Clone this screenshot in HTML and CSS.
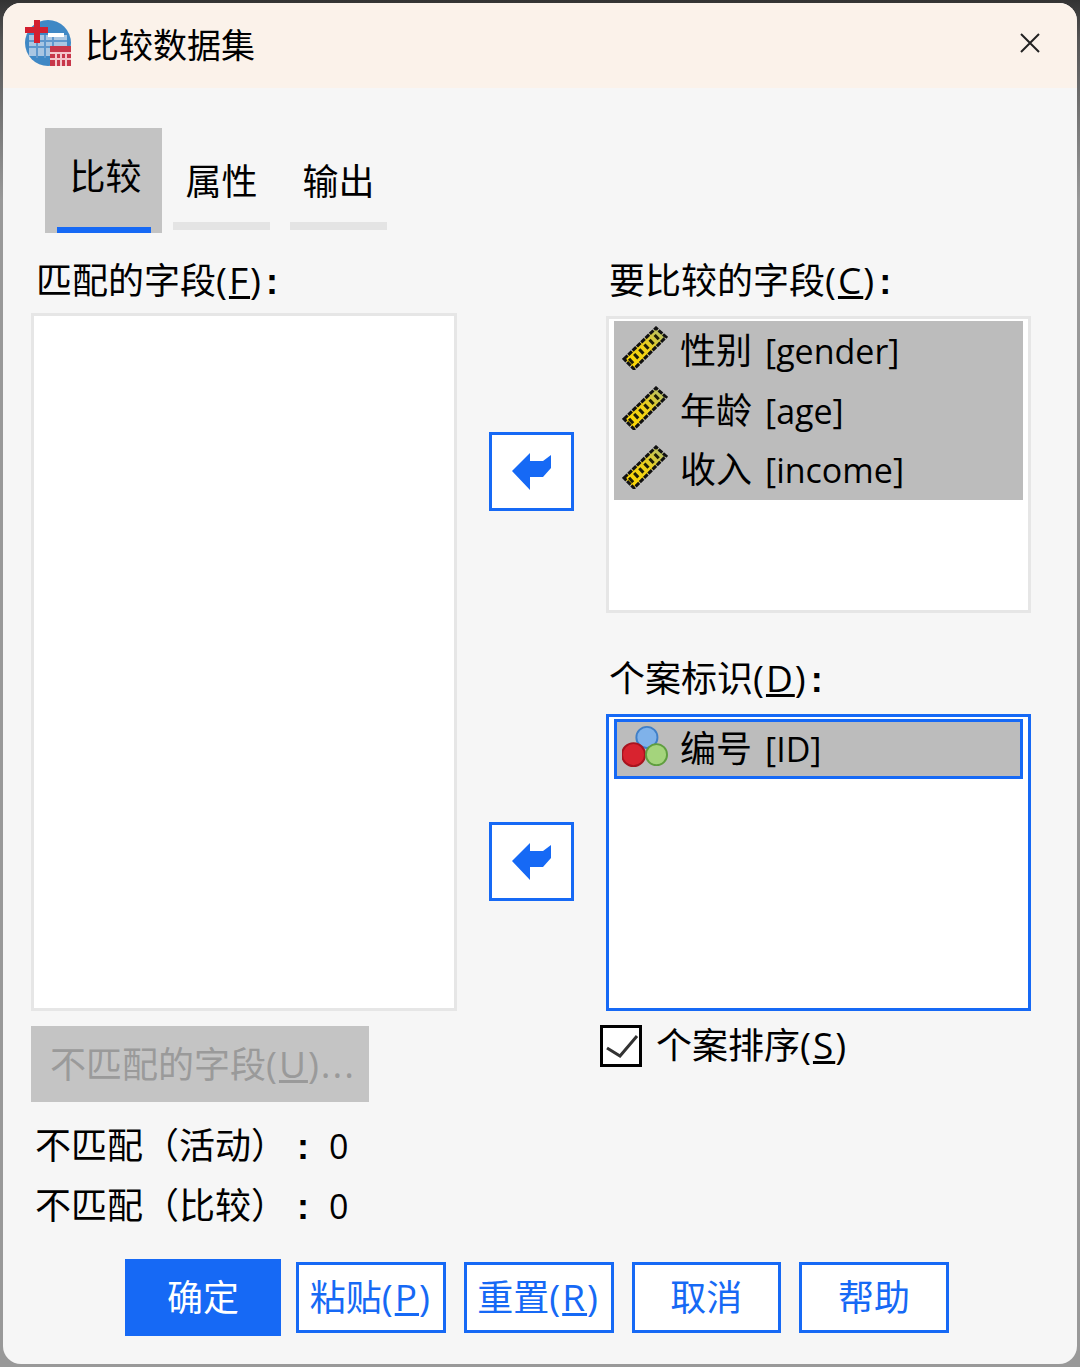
FILE: index.html
```html
<!DOCTYPE html>
<html lang="zh-CN">
<head>
  <meta charset="UTF-8" />
  <title>比较数据集</title>
  <link rel="stylesheet" href="styles.css">
</head>
<body>
  <svg class="defs" width="0" height="0">
    <defs>
      <linearGradient id="rulerFill" x1="0" y1="1" x2="1" y2="0">
        <stop offset="0" stop-color="#ffd800"/>
        <stop offset="0.55" stop-color="#eccf1c"/>
        <stop offset="1" stop-color="#a8bb78"/>
      </linearGradient>
      <symbol id="ruler" viewBox="0 0 44 44">
        <path d="M1 33 L33 2 L43 11 L11 43 Z" fill="url(#rulerFill)" stroke="#111" stroke-width="3" stroke-dasharray="5 1"/>
        <path d="M7 36 L37 8" stroke="#1c1c08" stroke-width="6" stroke-dasharray="3 4" fill="none"/>
      </symbol>
      <symbol id="arrow" viewBox="0 0 43 39">
        <path d="M2 19 L20 1 V9 H33 L41 3 V16 L33 25 H20 V38 Z" fill="#1669f5"/>
      </symbol>
    </defs>
  </svg>

  <div class="window">
    <div class="titlebar">
      <svg class="app-icon" width="46" height="46" viewBox="0 0 46 46">
        <circle cx="23" cy="23" r="23" fill="#3f88c5"/>
        <path d="M4 15 H42 V36 H4 Z" fill="#a9c6e2"/>
        <path d="M4 21 H42 M4 27 H42 M12 15 V38 M20 15 V38 M28 15 V38" stroke="#5f97cc" stroke-width="2"/>
        <rect x="23" y="13" width="16" height="4" fill="#ffffff"/>
        <path d="M0 7 H9 V0 H15 V7 H23 V13 H15 V23 H9 V13 H0 Z" fill="#d31f2f"/>
        <rect x="25" y="26" width="21" height="20" fill="#c8374a"/>
        <path d="M25 33 H46 M25 39 H46 M31 33 V46 M36 33 V46 M41 33 V46" stroke="#f3c7cc" stroke-width="2"/>
      </svg>
      <div class="title">比较数据集</div>
      <svg class="close" width="22" height="22" viewBox="0 0 22 22">
        <path d="M2 2 L20 20 M20 2 L2 20" stroke="#222" stroke-width="2" fill="none"/>
      </svg>
    </div>

    <div class="tabs">
      <div class="tab active"><div class="tab-label">比较</div><div class="tab-bar"></div></div>
      <div class="tab"><div class="tab-label">属性</div><div class="tab-bar"></div></div>
      <div class="tab"><div class="tab-label">输出</div><div class="tab-bar"></div></div>
    </div>

    <div class="main">
      <div class="col-left">
        <div class="label label-first left-label">匹配的字段<span class="mn">(<u>F</u>)</span><b class="colon">:</b></div>
        <div class="list list-tall"></div>
        <div class="btn-disabled">不匹配的字段<span class="mn">(<u>U</u>)...</span></div>
        <div class="status">不匹配（活动）<b class="colon-status">:</b><span class="num">0</span></div>
        <div class="status">不匹配（比较）<b class="colon-status">:</b><span class="num">0</span></div>
      </div>

      <div class="col-mid">
        <div class="move-btn"><svg width="43" height="39"><use href="#arrow"/></svg></div>
        <div class="move-btn"><svg width="43" height="39"><use href="#arrow"/></svg></div>
      </div>

      <div class="col-right">
        <div class="label label-first">要比较的字段<span class="mn">(<u>C</u>)</span><b class="colon">:</b></div>
        <div class="list list-short">
          <div class="row"><svg class="row-icon" width="46" height="44"><use href="#ruler"/></svg><span>性别 <span class="field">[gender]</span></span></div>
          <div class="row"><svg class="row-icon" width="46" height="44"><use href="#ruler"/></svg><span>年龄 <span class="field">[age]</span></span></div>
          <div class="row"><svg class="row-icon" width="46" height="44"><use href="#ruler"/></svg><span>收入 <span class="field">[income]</span></span></div>
        </div>
        <div class="label label-second">个案标识<span class="mn">(<u>D</u>)</span><b class="colon">:</b></div>
        <div class="list list-short focused">
          <div class="row current">
            <svg class="row-icon" width="46" height="46" viewBox="0 0 48 46">
              <circle cx="26" cy="14" r="11" fill="#7fb2ea" stroke="#3f7fc8" stroke-width="2"/>
              <circle cx="12" cy="32" r="12" fill="#d8232f" stroke="#a8141f" stroke-width="2"/>
              <circle cx="36" cy="32" r="11" fill="#a4d47c" stroke="#5f9e3f" stroke-width="2"/>
            </svg>
            <span>编号 <span class="field">[ID]</span></span>
          </div>
        </div>
        <label class="check">
          <span class="check-box">
            <svg width="36" height="36" viewBox="0 0 36 36"><path d="M4 20 L17 28 L34 8" stroke="#333" stroke-width="3" fill="none"/></svg>
          </span>
          <span>个案排序<span class="mn">(<u>S</u>)</span></span>
        </label>
      </div>
    </div>

    <div class="footer">
      <button class="btn primary">确定</button>
      <button class="btn">粘贴<span class="mn">(<u>P</u>)</span></button>
      <button class="btn">重置<span class="mn">(<u>R</u>)</span></button>
      <button class="btn">取消</button>
      <button class="btn">帮助</button>
    </div>
  </div>
</body>
</html>
```

FILE: styles.css
```css
* {
  box-sizing: border-box;
}

html, body {
  margin: 0;
  height: 1367px;
  overflow: hidden;
}

body {
  padding: 3px;
  background: linear-gradient(#333333 0, #555555 40px, #999999 200px);
  font-family: "Liberation Sans", "Noto Sans CJK SC", sans-serif;
  font-size: 36px;
  color: #000;
}

.defs {
  display: block;
  height: 0;
}

.window {
  height: 1361px;
  background: #f6f6f6;
  border-radius: 18px;
  overflow: hidden;
}

.titlebar {
  height: 85px;
  display: flex;
  align-items: center;
  padding: 0 36px 5px 22px;
  background: #fbf2ea;
}

.app-icon {
  margin-right: 14px;
}

.title {
  flex: 1;
  font-size: 34px;
}

.tabs {
  display: flex;
  align-items: flex-start;
  height: 105px;
  margin: 40px 0 0 42px;
}

.tab {
  display: flex;
  flex-direction: column;
  align-items: center;
  width: 97px;
  margin-left: 20px;
}

.tab-label {
  height: 78px;
  margin-top: 16px;
  line-height: 78px;
}

.tab-bar {
  width: 100%;
  height: 8px;
  background: #e4e4e4;
}

.tab.active {
  width: 117px;
  margin: 0 -9px 0 0;
  background: #c3c3c3;
}

.tab.active .tab-label {
  height: 99px;
  margin-top: 0;
  padding-left: 4px;
  line-height: 99px;
}

.tab.active .tab-bar {
  width: 94px;
  height: 6px;
  background: #1669f5;
}

.main {
  display: grid;
  grid-template-columns: 426px 149px 425px;
  padding-left: 28px;
}

.label {
  line-height: 50px;
  white-space: nowrap;
}

.label-first {
  height: 83px;
  padding: 22px 0 0 3px;
}

.left-label {
  height: 80px;
  padding-left: 5px;
}

.label-second {
  height: 101px;
  padding: 40px 0 0 3px;
}

/* access keys are drawn wider than the field names */
.mn {
  font-family: "Open Sans", "Liberation Sans", sans-serif;
  font-size: 37px;
  letter-spacing: 2px;
}

.field {
  margin-left: 3px;
  font-family: "Open Sans", "Liberation Sans", sans-serif;
  font-size: 34px;
}

.colon {
  margin-left: 3px;
  font-weight: bold;
}

.list {
  border: 3px solid #e6e6e6;
  background: #fff;
  padding: 2px 5px;
}

.list-tall {
  height: 698px;
}

.list-short {
  height: 297px;
}

.list.focused {
  border-color: #1669f5;
}

.row {
  display: flex;
  align-items: center;
  height: 59.7px;
  padding: 0 0 6px 8px;
  gap: 12px;
  background: #bcbcbc;
  white-space: nowrap;
}

.row.current {
  border: 3px solid #1669f5;
  padding: 0 0 5px 5px;
}

.row-icon {
  flex: none;
}

.btn-disabled {
  width: 338px;
  height: 76px;
  margin-top: 15px;
  padding-left: 19px;
  line-height: 76px;
  background: #c4c4c4;
  color: #9a9a9a;
  white-space: nowrap;
}

.status {
  height: 60px;
  line-height: 60px;
  padding-left: 4px;
  white-space: nowrap;
}

.btn-disabled + .status {
  margin-top: 14px;
}

.colon-status {
  margin-left: 10px;
}

.num {
  margin-left: 20px;
  font-family: "Open Sans", sans-serif;
  font-size: 34px;
}

.col-mid {
  display: flex;
  flex-direction: column;
  gap: 311px;
  padding: 199px 0 0 32px;
}

.move-btn {
  display: flex;
  align-items: center;
  justify-content: center;
  width: 85px;
  height: 79px;
  border: 3px solid #1669f5;
  background: #fff;
}

.check {
  display: flex;
  align-items: center;
  gap: 14px;
  margin: 13px 0 0 -6px;
  line-height: 42px;
}

.check-box {
  display: flex;
  align-items: center;
  justify-content: center;
  width: 42px;
  height: 42px;
  border: 3px solid #000;
  background: #fff;
}

.footer {
  display: flex;
  align-items: center;
  height: 77px;
  margin-top: 23px;
  padding-left: 122px;
  gap: 18px;
}

.btn {
  width: 149.75px;
  height: 71px;
  padding: 0 0 5px;
  border: 3px solid #1669f5;
  background: #fff;
  color: #1669f5;
  font: inherit;
  white-space: nowrap;
}

.btn.primary {
  width: 156px;
  height: 77px;
  margin-right: -3px;
  background: #1669f5;
  color: #fff;
}
```
